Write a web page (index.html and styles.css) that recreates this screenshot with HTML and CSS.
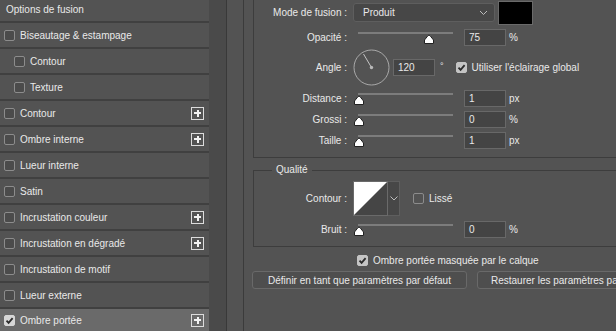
FILE: index.html
```html
<!DOCTYPE html>
<html lang="fr">

<head>
  <meta charset="UTF-8">
  <title>Style de calque - Ombre portée</title>
  <link rel="stylesheet" href="styles.css">
</head>

<body>
  <div class="dialog">
    <!-- liste des effets -->
    <ul class="style-list">
      <li class="style-item head">Options de fusion</li>
      <li class="style-item"><span class="box"></span>Biseautage &amp; estampage</li>
      <li class="style-item sub"><span class="box"></span>Contour</li>
      <li class="style-item sub"><span class="box"></span>Texture</li>
      <li class="style-item"><span class="box"></span>Contour<span class="plus"></span></li>
      <li class="style-item"><span class="box"></span>Ombre interne<span class="plus"></span></li>
      <li class="style-item"><span class="box"></span>Lueur interne</li>
      <li class="style-item"><span class="box"></span>Satin</li>
      <li class="style-item"><span class="box"></span>Incrustation couleur<span class="plus"></span></li>
      <li class="style-item"><span class="box"></span>Incrustation en dégradé<span class="plus"></span></li>
      <li class="style-item"><span class="box"></span>Incrustation de motif</li>
      <li class="style-item"><span class="box"></span>Lueur externe</li>
      <li class="style-item active">
        <span class="box checked"><svg width="9" height="9" viewBox="0 0 9 9"><path d="M1.5 4.6 L3.6 6.8 L7.6 2.2" fill="none" stroke="#2b2b2b" stroke-width="1.8"/></svg></span>Ombre portée<span class="plus"></span>
      </li>
    </ul>

    <div class="gutter"></div>
    <div class="spacer"></div>

    <!-- réglages de l'ombre portée -->
    <div class="panel">
      <div class="group structure">
        <div class="row row-mode">
          <span class="lbl">Mode de fusion :</span>
          <div class="select">
            <span>Produit</span>
            <svg width="9" height="6" viewBox="0 0 9 6"><path d="M1 1 L4.5 4.5 L8 1" fill="none" stroke="#bdbdbd" stroke-width="1"/></svg>
          </div>
          <div class="swatch"></div>
        </div>

        <div class="row row-opacity">
          <span class="lbl">Opacité :</span>
          <div class="slider">
            <span class="track"></span>
            <svg class="thumb" style="left:70px" width="12" height="10" viewBox="0 0 12 10"><path d="M1.5 9.5 L1.5 6 L5 1.6 Q6 0.6 7 1.6 L10.5 6 L10.5 9.5 Z" fill="#fff" stroke="#222" stroke-width="1"/></svg>
          </div>
          <div class="field">75</div><span class="unit">%</span>
        </div>

        <div class="row row-angle">
          <span class="lbl">Angle :</span>
          <svg class="dial" width="37" height="37" viewBox="0 0 37 37">
            <circle cx="18.5" cy="18.5" r="17.5" fill="none" stroke="#a9a9a9" stroke-width="1"/>
            <line x1="18.5" y1="18.5" x2="10.5" y2="5" stroke="#c4c4c4" stroke-width="1"/>
            <circle cx="18.5" cy="18.5" r="1.7" fill="#b8b8b8"/>
          </svg>
          <div class="field">120</div><span class="deg">°</span>
          <span class="box checked light"><svg width="9" height="9" viewBox="0 0 9 9"><path d="M1.5 4.6 L3.6 6.8 L7.6 2.2" fill="none" stroke="#2b2b2b" stroke-width="1.8"/></svg></span>
          <span class="check-text">Utiliser l'éclairage global</span>
        </div>

        <div class="row row-step">
          <span class="lbl">Distance :</span>
          <div class="slider">
            <span class="track"></span>
            <svg class="thumb" style="left:0px" width="12" height="10" viewBox="0 0 12 10"><path d="M1.5 9.5 L1.5 6 L5 1.6 Q6 0.6 7 1.6 L10.5 6 L10.5 9.5 Z" fill="#fff" stroke="#222" stroke-width="1"/></svg>
          </div>
          <div class="field">1</div><span class="unit">px</span>
        </div>

        <div class="row row-step">
          <span class="lbl">Grossi :</span>
          <div class="slider">
            <span class="track"></span>
            <svg class="thumb" style="left:0px" width="12" height="10" viewBox="0 0 12 10"><path d="M1.5 9.5 L1.5 6 L5 1.6 Q6 0.6 7 1.6 L10.5 6 L10.5 9.5 Z" fill="#fff" stroke="#222" stroke-width="1"/></svg>
          </div>
          <div class="field">0</div><span class="unit">%</span>
        </div>

        <div class="row row-step">
          <span class="lbl">Taille :</span>
          <div class="slider">
            <span class="track"></span>
            <svg class="thumb" style="left:0px" width="12" height="10" viewBox="0 0 12 10"><path d="M1.5 9.5 L1.5 6 L5 1.6 Q6 0.6 7 1.6 L10.5 6 L10.5 9.5 Z" fill="#fff" stroke="#222" stroke-width="1"/></svg>
          </div>
          <div class="field">1</div><span class="unit">px</span>
        </div>
      </div>

      <fieldset class="group quality">
        <legend>Qualité</legend>
        <div class="row row-contour">
          <span class="lbl">Contour :</span>
          <div class="contour-pick">
            <svg class="contour-preview" width="35" height="35" viewBox="0 0 35 35">
              <rect x="0" y="0" width="35" height="35" fill="#454545"/>
              <path d="M0 0 L35 0 L0 35 Z" fill="#fff"/>
              <rect x="0.5" y="0.5" width="34" height="34" fill="none" stroke="#6a6a6a"/>
            </svg>
            <div class="contour-drop">
              <svg width="8" height="5" viewBox="0 0 8 5"><path d="M0.5 0.5 L4 4 L7.5 0.5" fill="none" stroke="#bdbdbd" stroke-width="1"/></svg>
            </div>
          </div>
          <span class="box"></span>
          <span class="check-text">Lissé</span>
        </div>

        <div class="row row-noise">
          <span class="lbl">Bruit :</span>
          <div class="slider">
            <span class="track"></span>
            <svg class="thumb" style="left:0px" width="12" height="10" viewBox="0 0 12 10"><path d="M1.5 9.5 L1.5 6 L5 1.6 Q6 0.6 7 1.6 L10.5 6 L10.5 9.5 Z" fill="#fff" stroke="#222" stroke-width="1"/></svg>
          </div>
          <div class="field">0</div><span class="unit">%</span>
        </div>
      </fieldset>

      <div class="mask-row">
        <span class="box checked light"><svg width="9" height="9" viewBox="0 0 9 9"><path d="M1.5 4.6 L3.6 6.8 L7.6 2.2" fill="none" stroke="#2b2b2b" stroke-width="1.8"/></svg></span>
        <span class="check-text">Ombre portée masquée par le calque</span>
      </div>

      <div class="buttons">
        <button class="btn btn-default">Définir en tant que paramètres par défaut</button>
        <button class="btn btn-reset">Restaurer les paramètres par défaut</button>
      </div>
    </div>
  </div>
</body>

</html>
```

FILE: styles.css
```css
/* reset */
* {
  margin: 0;
  padding: 0;
  box-sizing: border-box;
}

body {
  width: 616px;
  height: 331px;
  overflow: hidden;
  background: #535353;
  color: #e9e9e9;
  font-family: "Liberation Sans", Arial, sans-serif;
  font-size: 10px;
}

.dialog {
  display: flex;
  height: 331px;
}

/* liste des effets */
.style-list {
  width: 209px;
  flex-shrink: 0;
  list-style: none;
  background: #535353;
}

.style-item {
  display: flex;
  align-items: center;
  height: 26px;
  padding: 0 5px 0 4px;
  border-bottom: 2px solid #404040;
  white-space: nowrap;
}

.style-item.head {
  height: 23px;
  padding: 0 0 3px 6px;
}

.style-item.sub {
  padding-left: 14px;
}

.style-item.active {
  height: 22px;
  border-bottom: none;
  background: #6a6a6a;
}

/* cases à cocher */
.box {
  display: inline-flex;
  align-items: center;
  justify-content: center;
  width: 11px;
  height: 11px;
  margin-right: 5px;
  flex-shrink: 0;
  border: 1px solid #8c8c8c;
  border-radius: 2px;
  background: #4b4b4b;
}

.box.checked {
  border-color: #d6d6d6;
  background: #d6d6d6;
}

.box.light {
  border-color: #c4c4c4;
  background: #c4c4c4;
}

.plus {
  position: relative;
  width: 13px;
  height: 13px;
  margin-left: auto;
  border: 1px solid #dcdcdc;
}

.plus::before,
.plus::after {
  content: "";
  position: absolute;
  background: #f2f2f2;
}

.plus::before {
  left: 2px;
  right: 2px;
  top: 4.5px;
  height: 2px;
}

.plus::after {
  top: 2px;
  bottom: 2px;
  left: 4.5px;
  width: 2px;
}

/* séparateurs verticaux */
.gutter {
  width: 18px;
  flex-shrink: 0;
  background: #4a4a4a;
  border-right: 1px solid #393939;
}

.spacer {
  width: 17px;
  flex-shrink: 0;
  border-right: 1px solid #3b3b3b;
}

/* panneau de réglages */
.panel {
  flex: 1;
  padding-left: 9px;
  display: flex;
  flex-direction: column;
  min-width: 0;
}

.group {
  border: 1px solid #3d3d3d;
  border-right: none;
  margin-right: -40px;
}

.structure {
  border-top: none;
  padding: 3px 0 8px;
}

.row {
  display: flex;
  align-items: center;
  height: 17px;
  white-space: nowrap;
}

.lbl {
  width: 93px;
  margin-right: 6px;
  text-align: right;
  flex-shrink: 0;
}

.row-mode {
  height: 19px;
}

.row-opacity {
  margin-top: 7px;
}

.row-angle {
  height: 37px;
  margin-top: 3px;
}

.row-step {
  margin-top: 4px;
}

/* liste déroulante */
.select {
  display: flex;
  align-items: center;
  justify-content: space-between;
  width: 142px;
  height: 19px;
  padding: 0 6px 0 9px;
  background: #474747;
  border: 1px solid #5e5e5e;
  border-radius: 3px;
}

.swatch {
  width: 35px;
  height: 24px;
  margin-left: 3px;
  background: #000;
  border: 1px solid #6a6a6a;
}

/* curseurs */
.slider {
  position: relative;
  width: 105px;
  height: 17px;
  flex-shrink: 0;
}

.track {
  position: absolute;
  left: 5px;
  width: 95px;
  top: 3px;
  height: 2px;
  background: #7c7c7c;
}

.thumb {
  position: absolute;
  top: 5px;
}

.field {
  width: 42px;
  height: 17px;
  margin-left: 6px;
  padding-left: 4px;
  line-height: 15px;
  background: #444;
  border: 1px solid #686868;
  flex-shrink: 0;
}

.unit {
  margin-left: 3px;
}

.dial {
  flex-shrink: 0;
}

.row-angle .field {
  margin-left: 3px;
}

.deg {
  align-self: flex-start;
  margin: 12px 0 0 5px;
  font-size: 9px;
}

.row-angle .box {
  margin-left: 12px;
}

.check-text {
  white-space: nowrap;
}

/* groupe Qualité */
.quality {
  min-width: 0;
  margin-top: 6px;
  padding: 5px 0 8px;
}

.quality legend {
  margin-left: 18px;
  padding: 0 4px;
  line-height: 12px;
}

.row-contour {
  height: 35px;
}

.contour-pick {
  display: flex;
  height: 35px;
  flex-shrink: 0;
}

.contour-drop {
  display: flex;
  align-items: center;
  justify-content: center;
  width: 12px;
  height: 35px;
  background: #474747;
  border: 1px solid #5e5e5e;
  border-left: none;
}

.row-contour .box {
  margin-left: 13px;
  background: transparent;
}

.row-noise {
  margin-top: 5px;
}

/* case "masquée par le calque" */
.mask-row {
  display: flex;
  align-items: center;
  height: 12px;
  margin: 7px 0 0 104px;
}

/* boutons */
.buttons {
  display: flex;
  gap: 10px;
  margin: 5px 0 0 -1px;
  white-space: nowrap;
}

.btn {
  height: 18px;
  flex-shrink: 0;
  font-family: "Liberation Sans", Arial, sans-serif;
  font-size: 10px;
  color: #e9e9e9;
  background: #4e4e4e;
  border: 1px solid #696969;
  border-radius: 3px;
}

.btn-default {
  width: 215px;
}

.btn-reset {
  width: 200px;
  text-align: left;
  padding-left: 13px;
}
```
